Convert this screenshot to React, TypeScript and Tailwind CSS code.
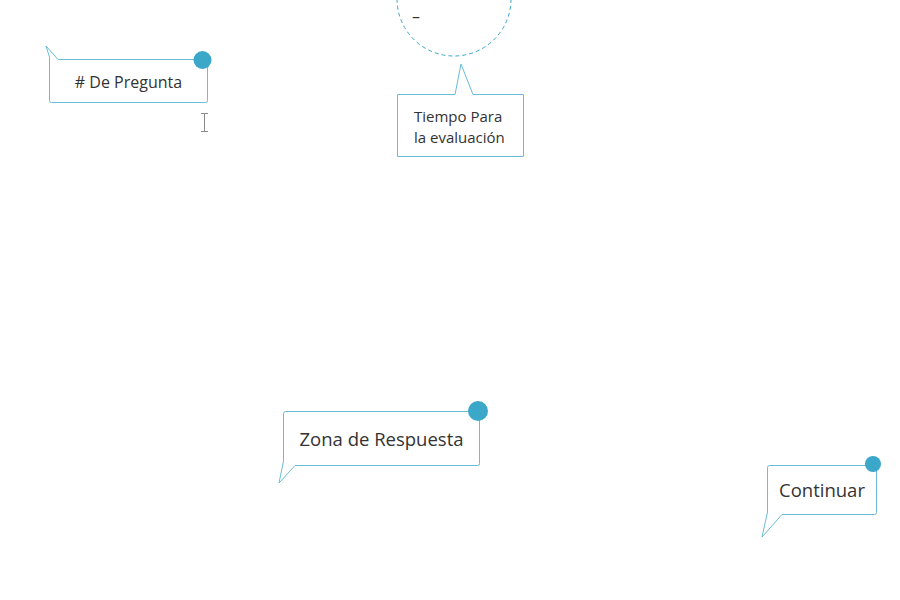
const LINE = '#6bbcd8'
const DOT = '#3ba7c9'

const App = () => (
  <div className="relative w-[900px] h-[600px] overflow-hidden bg-white text-[#333333] font-['Open_Sans','Noto_Sans',sans-serif]">
    {/* timer circle */}
    <svg className="absolute left-[390px] top-0" width="130" height="64" viewBox="390 0 130 64">
      <circle cx="454" cy="-1" r="57" fill="none" stroke={DOT} strokeWidth="1" strokeDasharray="4 3" />
    </svg>
    <span className="absolute left-[412px] top-[6px] text-[16px] leading-[20px]">–</span>

    {/* # De Pregunta */}
    <div className="absolute left-[49px] top-[59px] w-[159px] h-[44px] flex items-center justify-center pt-[1px]">
      <svg className="absolute left-0 top-0 overflow-visible" width="159" height="44">
        <path d="M -3 -13 L 9 0.5 L 156.5 0.5 Q 158.5 0.5 158.5 2.5 L 158.5 41.5 Q 158.5 43.5 156.5 43.5 L 2.5 43.5 Q 0.5 43.5 0.5 41.5 L 0.5 -2 Z" fill="white" stroke={LINE} strokeWidth="1" />
        <circle cx="153.5" cy="1" r="9" fill={DOT} />
      </svg>
      <span className="relative text-[16px]">#&nbsp;De Pregunta</span>
    </div>

    {/* text cursor */}
    <svg className="absolute left-[199px] top-[112px]" width="11" height="21">
      <path d="M 2 1.5 L 9 1.5 M 5.5 1.5 L 5.5 19.5 M 2 19.5 L 9 19.5" stroke="#8a8a8a" strokeWidth="1" fill="none" />
    </svg>

    {/* Tiempo Para la evaluación */}
    <div className="absolute left-[397px] top-[94px] w-[127px] h-[63px] pl-[17px] pt-[12px]">
      <svg className="absolute left-0 top-0 overflow-visible" width="127" height="63">
        <path d="M 64 -30 L 76 0.5 L 126.5 0.5 L 126.5 62.5 L 0.5 62.5 L 0.5 0.5 L 58 0.5 Z" fill="white" stroke={LINE} strokeWidth="1" />
      </svg>
      <p className="relative text-[15px] leading-[21px]">Tiempo Para<br />la evaluación</p>
    </div>

    {/* Zona de Respuesta */}
    <div className="absolute left-[283px] top-[411px] w-[197px] h-[55px] flex items-center justify-center">
      <svg className="absolute left-0 top-0 overflow-visible" width="197" height="55">
        <path d="M -4 72 L 0.5 50 L 0.5 2.5 Q 0.5 0.5 2.5 0.5 L 194.5 0.5 Q 196.5 0.5 196.5 2.5 L 196.5 52.5 Q 196.5 54.5 194.5 54.5 L 12 54.5 Z" fill="white" stroke={LINE} strokeWidth="1" />
        <circle cx="195" cy="0" r="10" fill={DOT} />
      </svg>
      <span className="relative text-[18.5px]">Zona de Respuesta</span>
    </div>

    {/* Continuar */}
    <div className="absolute left-[767px] top-[465px] w-[110px] h-[50px] flex items-center justify-center">
      <svg className="absolute left-0 top-0 overflow-visible" width="110" height="50">
        <path d="M -5 72 L 0.5 47 L 0.5 2.5 Q 0.5 0.5 2.5 0.5 L 107.5 0.5 Q 109.5 0.5 109.5 2.5 L 109.5 47.5 Q 109.5 49.5 107.5 49.5 L 15 49.5 Z" fill="white" stroke={LINE} strokeWidth="1" />
        <circle cx="106" cy="-1" r="8" fill={DOT} />
      </svg>
      <span className="relative text-[18.5px]">Continuar</span>
    </div>
  </div>
)

export default App
